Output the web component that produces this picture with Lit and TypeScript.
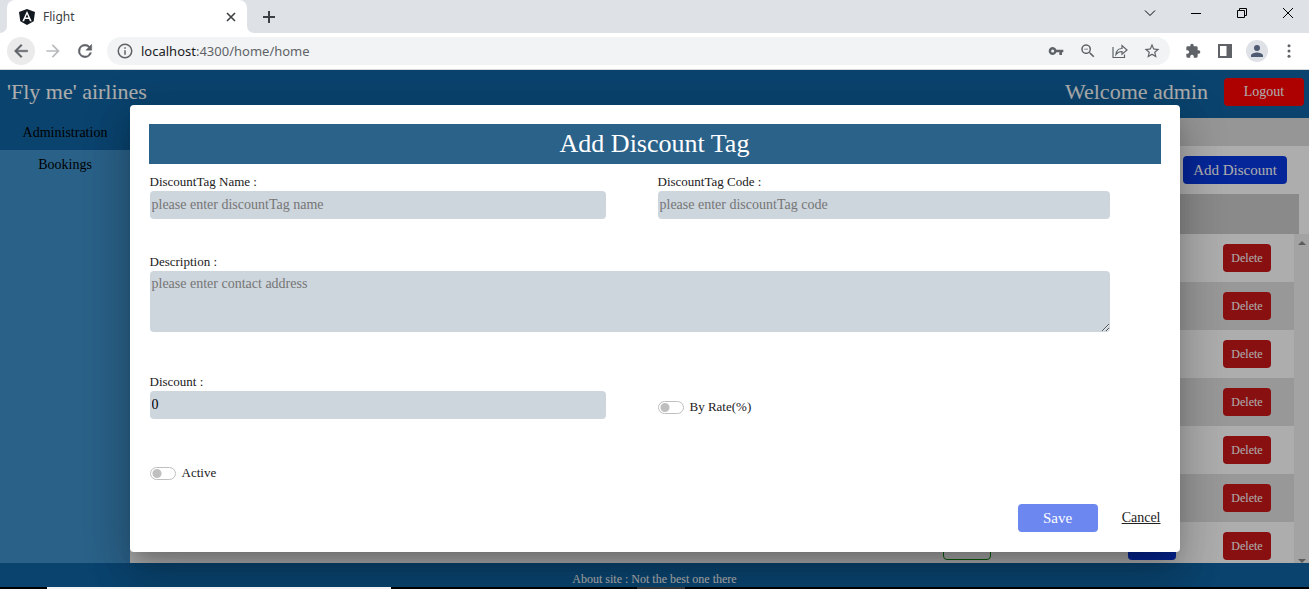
import { LitElement, html, css } from "lit";
import { customElement, state } from "lit/decorators.js";

@customElement("browser-chrome")
class BrowserChrome extends LitElement {
  static styles = css`
    :host { display: block; font-family: "Noto Sans", "Open Sans", sans-serif; color: #3c4043; }
    button { border: 0; padding: 0; background: none; color: inherit; display: grid; place-items: center; flex: none; }
    svg { display: block; }
    .strip { display: flex; height: 33px; background: #dee1e6; align-items: stretch; }
    .edge { width: 7px; background: #fff; flex: none; }
    .edge i { display: block; height: 33px; background: #dee1e6; }
    .left i { border-bottom-right-radius: 7px; }
    .right i { border-bottom-left-radius: 7px; }
    .tab { width: 240px; box-sizing: border-box; background: #fff; border-radius: 8px 8px 0 0; display: flex; align-items: center; padding: 0 9px 0 11px; }
    .title { font-size: 12px; flex: 1; padding-left: 7px; }
    .close { width: 14px; height: 14px; }
    .plus { width: 30px; }
    .win { margin-left: auto; margin-right: -2px; display: flex; color: #000; padding-bottom: 7px; }
    .win button { width: 46px; }
    .bar { display: flex; align-items: center; height: 36px; background: #fff; border-bottom: 1px solid #d5d8dc; padding: 0 10px 0 7px; color: #5f6368; }
    .round { width: 28px; height: 28px; border-radius: 14px; }
    .hover { background: #ebebec; }
    .nav { display: flex; gap: 4px; margin-right: 8px; }
    .dim { color: #b9bbbe; }
    .omni { flex: 1; height: 28px; border-radius: 14px; background: #f1f3f4; display: flex; align-items: center; padding: 0 8px; }
    .info { width: 20px; }
    .url { flex: 1; min-width: 0; height: 20px; font-size: 13px; line-height: 20px; padding-left: 6px; white-space: nowrap; }
    .host { color: #202124; }
    .acts, .exts { display: flex; gap: 12px; }
    .acts button, .exts button { width: 20px; height: 20px; }
    .exts { padding-left: 13px; }
    .exts .me { width: 22px; height: 22px; border-radius: 11px; background: #dee1e6; margin: -1px; color: #4f5b73; }
  `;

  render() {
    return html`
      <div class="strip">
        <div class="edge left"><i></i></div>
        <div class="tab">
          <svg width="18" height="18" viewBox="0 0 18 18">
            <path d="M9 1 17 4 15.700 13.300 9 17 2.300 13.300 1 4Z" fill="#111820" />
            <path d="M9 3 4.300 13.300H6.100L7 11H11L11.900 13.300H13.700ZM9 6.300 10.400 9.600H7.600Z" fill="#fff" />
          </svg>
          <span class="title">Flight</span>
          <button class="close" aria-label="Close tab">
            <svg width="10" height="10" viewBox="0 0 10 10" stroke="#3c4043" stroke-width="1.600"><path d="M1 1 9 9M9 1 1 9" /></svg>
          </button>
        </div>
        <div class="edge right"><i></i></div>
        <button class="plus" aria-label="New tab">
          <svg width="12" height="12" viewBox="0 0 12 12" stroke="#3c4043" stroke-width="2"><path d="M6 0V12M0 6H12" /></svg>
        </button>
        <div class="win">
          <button aria-label="Search tabs"><svg width="12" height="12" viewBox="0 0 12 12" fill="none" stroke="currentColor"><path d="M1 3.500 6 8.500 11 3.500" /></svg></button>
          <button aria-label="Minimize"><svg width="10" height="10" viewBox="0 0 10 10" fill="none" stroke="currentColor"><path d="M0 5.500H10" /></svg></button>
          <button aria-label="Restore"><svg width="10" height="10" viewBox="0 0 10 10" fill="none" stroke="currentColor"><path d="M.5 2.500H7.500V9.500H.5ZM2.500 2.500V.5H9.500V7.500H7.500" /></svg></button>
          <button aria-label="Close"><svg width="10" height="10" viewBox="0 0 10 10" fill="none" stroke="currentColor"><path d="M0 0 10 10M10 0 0 10" /></svg></button>
        </div>
      </div>
      <div class="bar">
        <div class="nav">
          <button class="round hover" aria-label="Back"><svg width="20" height="20" viewBox="0 0 24 24" fill="currentColor"><path d="M20 11H7.830l5.590-5.590L12 4l-8 8 8 8 1.410-1.410L7.830 13H20z" stroke="currentColor" stroke-width=".5" /></svg></button>
          <button class="round dim" aria-label="Forward"><svg width="20" height="20" viewBox="0 0 24 24" fill="currentColor"><path d="m12 4-1.410 1.410L16.170 11H4v2h12.170l-5.580 5.590L12 20l8-8z" /></svg></button>
          <button class="round" aria-label="Reload"><svg width="20" height="20" viewBox="0 0 24 24" fill="currentColor"><path d="M17.650 6.350A7.958 7.958 0 0 0 12 4a8 8 0 1 0 7.730 10h-2.080A6 6 0 1 1 12 6c1.660 0 3.140.69 4.220 1.780L13 11h7V4z" stroke="currentColor" stroke-width=".6" /></svg></button>
        </div>
        <div class="omni">
          <button class="info" aria-label="Site information"><svg width="18" height="18" viewBox="0 0 24 24" fill="currentColor"><path d="M11 7h2v2h-2zm0 4h2v6h-2zm1-9a10 10 0 1 0 0 20 10 10 0 0 0 0-20m0 18a8 8 0 1 1 0-16 8 8 0 0 1 0 16" /></svg></button>
          <div class="url"><span class="host">localhost</span>:4300/home/home</div>
          <div class="acts">
            <button aria-label="Passwords"><svg width="16" height="16" viewBox="0 0 24 24" fill="currentColor"><path d="M12.650 10A6 6 0 1 0 12.650 14H17v4h4v-4h2v-4zM7 14.300a2.300 2.300 0 1 1 0-4.600 2.300 2.300 0 0 1 0 4.600" /></svg></button>
            <button aria-label="Zoom"><svg width="18" height="18" viewBox="0 0 24 24" fill="currentColor"><path d="M15.500 14h-.79l-.28-.27A6.500 6.500 0 1 0 13.730 14.430l.27.28v.79l5 4.990L20.490 19zm-6 0a4.500 4.500 0 1 1 0-9 4.500 4.500 0 0 1 0 9M7 8.900h5v1.200H7z" /></svg></button>
            <button aria-label="Share"><svg width="16" height="16" viewBox="0 0 16 16" fill="none" stroke="currentColor" stroke-width="1.200"><path d="M1 4V14.500H12.500V11.500M4 11.500C4.300 8 6.500 5.500 10 5.500V2.500L15 7 10 11.300V8.500C7.500 8.500 5.500 9.300 4 11.500Z" /></svg></button>
            <button aria-label="Bookmark"><svg width="18" height="18" viewBox="0 0 24 24" fill="currentColor"><path d="m22 9.240-7.190-.62L12 2 9.190 8.630 2 9.240l5.460 4.730L5.820 21 12 17.270 18.180 21l-1.630-7.030zM12 15.400l-3.760 2.270 1-4.280-3.320-2.880 4.380-.38L12 6.100l1.710 4.040 4.380.38-3.320 2.880 1 4.280z" /></svg></button>
          </div>
        </div>
        <div class="exts">
          <button aria-label="Extensions"><svg width="16" height="16" viewBox="0 0 24 24" fill="currentColor"><path d="M20.500 11H19V7a2 2 0 0 0-2-2h-4V3.500a2.500 2.500 0 0 0-5 0V5H4a2 2 0 0 0-2 2v3.800h1.500a2.700 2.700 0 0 1 0 5.400H2V20a2 2 0 0 0 2 2h3.800v-1.500a2.700 2.700 0 0 1 5.400 0V22H17a2 2 0 0 0 2-2v-4h1.500a2.500 2.500 0 0 0 0-5" /></svg></button>
          <button aria-label="Side panel"><svg width="14" height="14" viewBox="0 0 14 14"><path d="M1 1H13V13H1Z" fill="none" stroke="currentColor" stroke-width="2" /><path d="M8.500 1H13V13H8.500Z" fill="currentColor" /></svg></button>
          <button class="me" aria-label="Profile"><svg width="18" height="18" viewBox="0 0 24 24" fill="currentColor"><path d="M12 12a4 4 0 1 0 0-8 4 4 0 0 0 0 8m0 2c-2.670 0-8 1.340-8 4v2h16v-2c0-2.660-5.330-4-8-4" /></svg></button>
          <button aria-label="Menu"><svg width="18" height="18" viewBox="0 0 24 24" fill="currentColor"><circle cx="12" cy="5" r="2" /><circle cx="12" cy="12" r="2" /><circle cx="12" cy="19" r="2" /></svg></button>
        </div>
      </div>
    `;
  }
}

@customElement("discount-dialog")
class DiscountDialog extends LitElement {
  @state() private discount = 0;

  static styles = css`
    :host { display: block; box-sizing: border-box; width: 1050px; max-width: 100%; background: #fff; border-radius: 4px; padding: 19px 19px 20px;
      box-shadow: 0 11px 15px -7px rgba(0,0,0,.2), 0 24px 38px 3px rgba(0,0,0,.14), 0 9px 46px 8px rgba(0,0,0,.12);
      font-size: 14px; color: #212121; }
    h1 { margin: 0; height: 40px; line-height: 40px; background: #2b6289; color: #fff; font-size: 26px; font-weight: 400; text-align: center; }
    form { display: grid; grid-template-columns: 456fr 452fr; column-gap: 52px; row-gap: 34px; padding: 9px 51px 0 1px; }
    .field { display: flex; flex-direction: column; }
    .wide { grid-column: 1 / -1; padding-bottom: 7px; }
    label { font-size: 13px; line-height: 18px; }
    input, textarea { font: inherit; }
    .box { box-sizing: border-box; width: 100%; height: 28px; border: 0; border-radius: 4px; background: #cdd5dd; padding: 1px 2px; margin: 0; color: #000; display: block; }
    .box::placeholder { color: #757575; opacity: 1; }
    textarea.box { height: 61px; padding: 4px 2px; line-height: 17px; }
    .switch { display: flex; align-items: center; gap: 6px; height: 20px; }
    .rate { align-self: end; padding-bottom: 2px; }
    .active { padding-top: 10px; }
    .switch input { appearance: none; box-sizing: border-box; width: 26px; height: 13px; margin: 0; border: 1px solid #bfbfbf; border-radius: 7px; background: radial-gradient(circle at 6px 50%, #bfbfbf 4px, transparent 5px) #fff; }
    .actions { display: flex; justify-content: flex-end; align-items: center; gap: 24px; padding: 21px 0 0; }
    .save { width: 80px; height: 28px; border: 0; border-radius: 4px; background: #6c87f0; color: #fff; font: inherit; font-size: 15px; }
    .cancel { color: #212121; }
  `;

  render() {
    return html`
      <h1>Add Discount Tag</h1>
      <form>
        <div class="field">
          <label for="name">DiscountTag Name :</label>
          <input class="box" id="name" placeholder="please enter discountTag name" />
        </div>
        <div class="field">
          <label for="code">DiscountTag Code :</label>
          <input class="box" id="code" placeholder="please enter discountTag code" />
        </div>
        <div class="field wide">
          <label for="desc">Description :</label>
          <textarea class="box" id="desc" placeholder="please enter contact address"></textarea>
        </div>
        <div class="field">
          <label for="discount">Discount :</label>
          <input class="box" id="discount" .value=${String(this.discount)} />
        </div>
        <div class="switch rate"><input type="checkbox" id="rate" /><label for="rate">By Rate(%)</label></div>
        <div class="switch active"><input type="checkbox" id="active" /><label for="active">Active</label></div>
      </form>
      <div class="actions">
        <button class="save">Save</button>
        <a class="cancel" href="#">Cancel</a>
      </div>
    `;
  }
}

@customElement("app-root")
class AppRoot extends LitElement {
  private rows = [0, 1, 2, 3, 4, 5, 6];

  static styles = css`
    :host { display: flex; flex-direction: column; height: 100vh; overflow: hidden; font-family: "Liberation Serif", "Times New Roman", serif; font-size: 14px; }
    button { font: inherit; border: 0; border-radius: 4px; padding: 0; color: #fff; }
    .site { flex: 1; min-height: 0; display: flex; flex-direction: column; position: relative; }
    header { display: flex; align-items: center; height: 48px; flex: none; box-sizing: border-box; padding: 0 5px 4px 7px; background: #1064a2; color: #fff; font-size: 22px; }
    .welcome { margin-left: auto; margin-right: 16px; }
    .logout { width: 80px; height: 28px; background: #f00; font-size: 14px; }
    .body { flex: 1; min-height: 0; display: flex; }
    nav { width: 130px; flex: none; background: #3f90c9; }
    nav a { display: block; height: 32px; line-height: 30px; text-align: center; color: #000; text-decoration: none; }
    nav a.on { background: #1064a2; }
    main { flex: 1; min-width: 0; display: flex; flex-direction: column; background: #fff; }
    .band { height: 28px; flex: none; background: #ddd; }
    .tools { height: 48px; flex: none; display: flex; justify-content: flex-end; align-items: center; padding-right: 22px; }
    .add { width: 104px; height: 28px; background: #0838e0; font-size: 15px; }
    .thead { height: 40px; flex: none; margin-right: 10px; background: #ccc; }
    .scroll { flex: 1; min-height: 0; display: flex; overflow: hidden; }
    .view { flex: 1; min-width: 0; }
    table { width: 100%; border-collapse: collapse; table-layout: fixed; }
    tr { height: 48px; }
    tr:nth-child(even) { background: #e0e0e0; }
    td { padding: 0; text-align: right; }
    td.state { padding-right: 118px; }
    td.edit { width: 67px; }
    td.del { width: 118px; padding-right: 23px; box-sizing: border-box; }
    td button { width: 48px; height: 28px; font-size: 12px; vertical-align: middle; box-sizing: border-box; }
    .state button { background: #fff; border: 1px solid #118a11; }
    .edit button { background: #0838e0; }
    .del button { background: #c9191a; }
    .track { width: 15px; flex: none; background: #f1f1f1; display: flex; flex-direction: column; justify-content: space-between; align-items: center; padding: 7px 0 0; box-sizing: border-box; }
    .track svg { display: block; }
    footer { height: 24px; flex: none; background: #1064a2; color: #fff; font-size: 12px; line-height: 32px; text-align: center; overflow: hidden; }
    .backdrop { position: absolute; inset: 0; background: rgba(0,0,0,.32); display: flex; align-items: center; justify-content: center; overflow: hidden; }
    .taskbar { height: 2px; flex: none; display: flex; background: #000; }
    .taskbar i { width: 344px; margin-left: 47px; background: #f3f3f3; }
    .taskbar b { width: 48px; margin-left: 246px; background: #333; }
  `;

  render() {
    return html`
      <browser-chrome></browser-chrome>
      <div class="site">
        <header>
          <span>'Fly me' airlines</span>
          <span class="welcome">Welcome admin</span>
          <button class="logout">Logout</button>
        </header>
        <div class="body">
          <nav><a class="on" href="#">Administration</a><a href="#">Bookings</a></nav>
          <main>
            <div class="band"></div>
            <div class="tools"><button class="add">Add Discount</button></div>
            <div class="thead"></div>
            <div class="scroll">
              <div class="view">
                <table>
                  ${this.rows.map(() => html`<tr>
                    <td class="state"><button aria-label="Status"></button></td>
                    <td class="edit"><button aria-label="Edit"></button></td>
                    <td class="del"><button>Delete</button></td>
                  </tr>`)}
                </table>
              </div>
              <div class="track">
                <svg width="8" height="4" viewBox="0 0 8 4"><path d="M0 4 4 0 8 4Z" fill="#888" /></svg>
                <svg width="8" height="4" viewBox="0 0 8 4"><path d="M0 0 4 4 8 0Z" fill="#888" /></svg>
              </div>
            </div>
          </main>
        </div>
        <footer>About site : Not the best one there</footer>
        <div class="backdrop"><discount-dialog role="dialog" aria-label="Add Discount Tag"></discount-dialog></div>
      </div>
      <div class="taskbar"><i></i><b></b></div>
    `;
  }
}
